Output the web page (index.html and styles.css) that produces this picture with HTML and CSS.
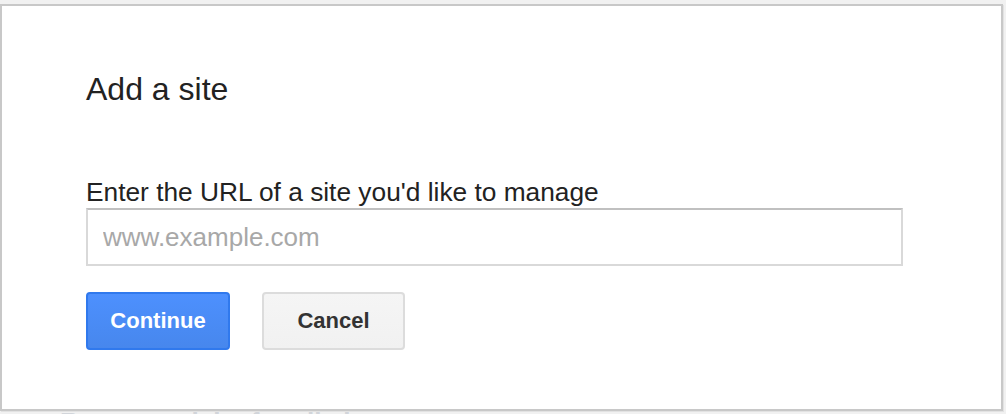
FILE: index.html
```html
<!DOCTYPE html>
<html>
<head>
<meta charset="utf-8">
<link rel="stylesheet" href="styles.css">
</head>
<body>
<div class="backdrop">
  <div class="backdrop-text">Recent activity for all sites</div>
</div>
<div class="dialog">
  <h1 class="title">Add a site</h1>
  <label class="label" for="url">Enter the URL of a site you'd like to manage</label>
  <input class="url-input" id="url" type="text" placeholder="www.example.com">
  <div class="actions">
    <button class="btn btn-primary">Continue</button>
    <button class="btn btn-secondary">Cancel</button>
  </div>
</div>
</body>
</html>
```
FILE: styles.css
```css
html, body {
  margin: 0;
  padding: 0;
}
body {
  width: 1006px;
  height: 414px;
  overflow: hidden;
  background: #f1f1f1;
  font-family: "Liberation Sans", Arial, sans-serif;
  position: relative;
}
.backdrop {
  padding: 407px 0 0 60px;
}
.backdrop-text {
  font-size: 26px;
  line-height: 30px;
  font-weight: bold;
  color: #d2d5da;
}
.dialog {
  position: absolute;
  top: 4px;
  left: 0;
  width: 1003px;
  height: 407px;
  box-sizing: border-box;
  background: #fff;
  border: 2px solid #c8c8c8;
  box-shadow: 1px 1px 0 #e2e2e2;
  padding: 63px 0 0 84px;
}
.title {
  margin: 0;
  font-size: 32px;
  line-height: 40px;
  font-weight: normal;
  color: #222;
}
.label {
  display: block;
  margin-top: 67px;
  font-size: 26.3px;
  line-height: 32px;
  color: #222;
}
.url-input {
  display: block;
  box-sizing: border-box;
  width: 817px;
  height: 58px;
  margin: 0;
  padding: 0 0 0 15px;
  border: 2px solid #d9d9d9;
  border-top-color: #c0c0c0;
  font-family: "Liberation Sans", Arial, sans-serif;
  font-size: 26px;
  color: #222;
  outline: none;
}
.url-input::placeholder {
  color: #a8a8a8;
}
.actions {
  display: flex;
  gap: 32px;
  margin-top: 26px;
}
.btn {
  box-sizing: border-box;
  height: 58px;
  width: 144px;
  border-radius: 4px;
  font-family: "Liberation Sans", Arial, sans-serif;
  font-size: 22px;
  font-weight: bold;
  padding: 0;
}
.btn-primary {
  background: linear-gradient(#4d90fe, #4787ed);
  border: 2px solid #3079ed;
  color: #fff;
}
.btn-secondary {
  width: 143px;
  background: linear-gradient(#f5f5f5, #f1f1f1);
  border: 2px solid #dcdcdc;
  color: #333;
}
```
